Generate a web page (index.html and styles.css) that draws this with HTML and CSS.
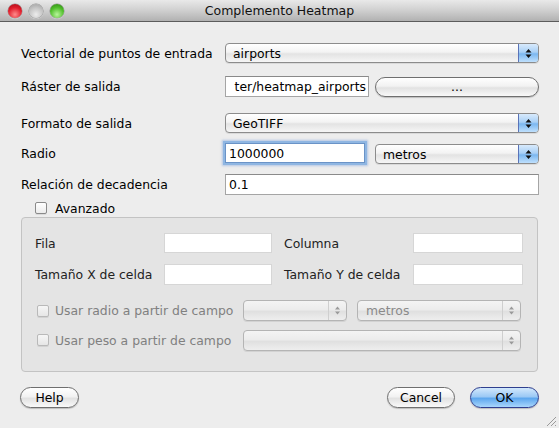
FILE: index.html
```html
<!DOCTYPE html>
<html>
<head>
<meta charset="utf-8">
<link rel="stylesheet" href="styles.css">
</head>
<body>
<div class="window">
  <div class="titlebar">
    <div class="lights">
      <span class="light red"></span>
      <span class="light grey"></span>
      <span class="light green"></span>
    </div>
    <div class="title">Complemento Heatmap</div>
  </div>
  <div class="content">
    <div class="row r1">
      <span class="label">Vectorial de puntos de entrada</span>
      <div class="combo full"><span class="combo-text">airports</span><span class="arrows"><svg width="7" height="11" viewBox="0 0 7 11"><path d="M3.5 1 L6.5 4.5 L0.5 4.5 Z M3.5 10 L6.5 6.5 L0.5 6.5 Z" fill="#111"/></svg></span></div>
    </div>
    <div class="row r2">
      <span class="label">Ráster de salida</span>
      <div class="field path"><span class="field-text">ter/heatmap_airports</span></div>
      <div class="pushbtn browse">...</div>
    </div>
    <div class="row r3">
      <span class="label">Formato de salida</span>
      <div class="combo full"><span class="combo-text">GeoTIFF</span><span class="arrows"><svg width="7" height="11" viewBox="0 0 7 11"><path d="M3.5 1 L6.5 4.5 L0.5 4.5 Z M3.5 10 L6.5 6.5 L0.5 6.5 Z" fill="#111"/></svg></span></div>
    </div>
    <div class="row r4">
      <span class="label">Radio</span>
      <div class="field focused radius"><span class="field-text">1000000</span></div>
      <div class="combo units"><span class="combo-text">metros</span><span class="arrows"><svg width="7" height="11" viewBox="0 0 7 11"><path d="M3.5 1 L6.5 4.5 L0.5 4.5 Z M3.5 10 L6.5 6.5 L0.5 6.5 Z" fill="#111"/></svg></span></div>
    </div>
    <div class="row r5">
      <span class="label">Relación de decadencia</span>
      <div class="field full"><span class="field-text">0.1</span></div>
    </div>
    <div class="check-row">
      <span class="checkbox"></span>
      <span class="check-label">Avanzado</span>
    </div>
    <div class="group">
      <div class="grid">
        <span class="glabel">Fila</span>
        <div class="field gfield"></div>
        <span class="glabel second">Columna</span>
        <div class="field gfield"></div>
      </div>
      <div class="grid g2">
        <span class="glabel">Tamaño X de celda</span>
        <div class="field gfield"></div>
        <span class="glabel second">Tamaño Y de celda</span>
        <div class="field gfield"></div>
      </div>
      <div class="usar u1">
        <span class="checkbox dis"></span>
        <span class="usar-label">Usar radio a partir de campo</span>
        <div class="combo disabled c-field"><span class="combo-text"></span><span class="arrows"><svg width="7" height="11" viewBox="0 0 7 11"><path d="M3.5 1.5 L6 4.5 L1 4.5 Z M3.5 9.5 L6 6.5 L1 6.5 Z" fill="#9a9a9a"/></svg></span></div>
        <div class="combo disabled c-units"><span class="combo-text">metros</span><span class="arrows"><svg width="7" height="11" viewBox="0 0 7 11"><path d="M3.5 1.5 L6 4.5 L1 4.5 Z M3.5 9.5 L6 6.5 L1 6.5 Z" fill="#9a9a9a"/></svg></span></div>
      </div>
      <div class="usar u2">
        <span class="checkbox dis"></span>
        <span class="usar-label">Usar peso a partir de campo</span>
        <div class="combo disabled c-wide"><span class="combo-text"></span><span class="arrows"><svg width="7" height="11" viewBox="0 0 7 11"><path d="M3.5 1.5 L6 4.5 L1 4.5 Z M3.5 9.5 L6 6.5 L1 6.5 Z" fill="#9a9a9a"/></svg></span></div>
      </div>
    </div>
    <div class="buttons">
      <div class="pushbtn help">Help</div>
      <div class="spacer"></div>
      <div class="pushbtn cancel">Cancel</div>
      <div class="pushbtn ok">OK</div>
    </div>
  </div>
  <svg class="grip" width="10" height="10" viewBox="0 0 10 10">
    <path d="M1 10 L10 1 M5 10 L10 5 M9 10 L10 9" stroke="#9a9a9a" stroke-width="1"/>
  </svg>
</div>
</body>
</html>
```
FILE: styles.css
```css
* { box-sizing: border-box; }
html, body {
  margin: 0;
  padding: 0;
  width: 559px;
  height: 428px;
  overflow: hidden;
  background: #ededed;
}
body {
  font-family: "DejaVu Sans", "Liberation Sans", sans-serif;
  font-size: 12.4px;
  color: #000;
}
.window {
  position: relative;
  width: 559px;
  height: 428px;
  background: #ededed;
}
.titlebar {
  height: 22px;
  background: linear-gradient(#e9e9e9, #cfcfcf 50%, #b1b1b1);
  border-bottom: 1px solid #5c5c5c;
  display: flex;
  align-items: center;
  position: relative;
}
.lights {
  display: flex;
  gap: 7px;
  padding-left: 8px;
}
.light {
  width: 14px;
  height: 14px;
  border-radius: 50%;
  display: block;
  box-shadow: 0 0 0 0.5px rgba(0,0,0,0.35), 0 1px 1px rgba(255,255,255,0.6);
}
.light.red { background: radial-gradient(circle at 50% 75%, #ff8c8c, #e01c2a 55%, #9b0d14); }
.light.grey { background: radial-gradient(circle at 50% 75%, #ececec, #c4c4c4 55%, #9a9a9a); }
.light.green { background: radial-gradient(circle at 50% 75%, #b8f59b, #4fbe2a 55%, #2c7d12); }
.title {
  position: absolute;
  left: 0;
  right: 0;
  text-align: center;
  font-size: 12.5px;
  color: #111;
  top: 3px;
}
.content {
  padding: 21px 20px 0 21px;
}
.row {
  display: flex;
  align-items: center;
}
.label {
  width: 204px;
  flex: none;
}
.r1 { height: 20px; }
.r2 { height: 21px; margin-top: 13px; }
.r3 { height: 20px; margin-top: 16px; }
.r4 { height: 22px; margin-top: 9px; }
.r5 { height: 21px; margin-top: 10px; }

.combo {
  position: relative;
  height: 20px;
  border: 1px solid #8c8c8c;
  border-radius: 4px;
  background: linear-gradient(#ffffff, #f3f3f3 45%, #e3e3e3 55%, #f6f6f6);
  box-shadow: 0 1px 0 rgba(0,0,0,0.08);
  display: flex;
  align-items: center;
  overflow: hidden;
}
.combo.full { width: 314px; }
.combo-text {
  flex: 1;
  padding-left: 7px;
  white-space: nowrap;
}
.arrows {
  width: 21px;
  height: 100%;
  flex: none;
  display: flex;
  align-items: center;
  justify-content: center;
  background: linear-gradient(#d8eafc, #a9d0f6 45%, #7bb7f0 55%, #bfe0fd);
  border-left: 1px solid #5a73b8;
  margin-right: -1px;
  border-right: 1px solid #2d3f9b;
}
.combo.units { width: 164px; margin-left: 10px; height: 20px; margin-top: 2px; }

.field {
  height: 21px;
  background: #fff;
  border: 1px solid #a5a5a5;
  border-top-color: #8a8a8a;
  display: flex;
  align-items: center;
}
.field-text { padding-left: 3px; white-space: nowrap; }
.field.full { width: 314px; }
.field.path { width: 144px; overflow: hidden; justify-content: flex-end; }
.field.path .field-text { padding-right: 2px; }
.field.radius {
  width: 140px;
  height: 20px;
  border: 1px solid #6a93c7;
  box-shadow: 0 0 0 2px #8fb6e2, 0 0 2px 3px rgba(120,160,220,0.5);
}
.field.radius .field-text { padding-left: 3px; }

.pushbtn {
  height: 21px;
  border: 1px solid #6f6f6f;
  border-radius: 11px;
  background: linear-gradient(#ffffff, #f2f2f2 45%, #e2e2e2 55%, #f9f9f9);
  box-shadow: 0 1px 1px rgba(0,0,0,0.2);
  display: flex;
  align-items: center;
  justify-content: center;
}
.browse { width: 164px; margin-left: 6px; height: 20px; }

.check-row {
  display: flex;
  align-items: center;
  height: 16px;
  margin-top: 5px;
  padding-left: 14px;
}
.checkbox {
  display: block;
  width: 12px;
  height: 12px;
  border: 1px solid #8a8a8a;
  border-radius: 2px;
  background: linear-gradient(#ffffff, #ececec);
  box-shadow: 0 1px 0 rgba(0,0,0,0.08);
  flex: none;
}
.check-label { margin-left: 8px; }

.group {
  margin-top: 1px;
  width: 517px;
  height: 155px;
  border: 1px solid #c3c3c3;
  border-radius: 4px;
  background: #e4e4e4;
  padding: 15px 0 0 13px;
}
.grid {
  display: grid;
  grid-template-columns: 129px 108px 141px 110px;
  align-items: center;
  height: 20px;
}
.grid.g2 { margin-top: 11px; height: 21px; }
.glabel { color: #222; white-space: nowrap; }
.glabel.second { padding-left: 12px; }
.gfield {
  height: 20px;
  border: 1px solid #d6d6d6;
  background: #fff;
}
.g2 .gfield { height: 21px; }

.usar {
  display: flex;
  align-items: center;
  height: 21px;
  padding-left: 2px;
}
.u1 { margin-top: 15px; }
.u2 { margin-top: 9px; height: 20px; }
.checkbox.dis {
  border-color: #b9b9b9;
  background: linear-gradient(#f6f6f6, #e6e6e6);
}
.usar-label {
  margin-left: 6px;
  color: #808080;
  width: 188px;
  white-space: nowrap;
}
.combo.disabled {
  border-color: #b4b4b4;
  background: linear-gradient(#f4f4f4, #ececec 45%, #e0e0e0 55%, #eeeeee);
  color: #8a8a8a;
  height: 21px;
}
.combo.disabled .arrows {
  background: transparent;
  border-left: 1px solid #cfcfcf;
  border-right: none;
  margin-right: 0;
  width: 18px;
}
.c-field { width: 104px; }
.c-units { width: 164px; margin-left: 10px; }
.c-wide { width: 278px; height: 20px; }
.c-units .combo-text { padding-left: 8px; }

.buttons {
  display: flex;
  align-items: center;
  margin-top: 15px;
  margin-left: -1px;
}
.spacer { flex: 1; }
.help { width: 59px; }
.cancel { width: 68px; }
.ok {
  width: 69px;
  margin-left: 15px;
  border-color: #2f3f8f;
  background: linear-gradient(#d2e8fc, #9cc9f5 45%, #5ea7ee 55%, #a9d6fc);
}
.grip {
  position: absolute;
  right: 3px;
  bottom: 2px;
}
```
